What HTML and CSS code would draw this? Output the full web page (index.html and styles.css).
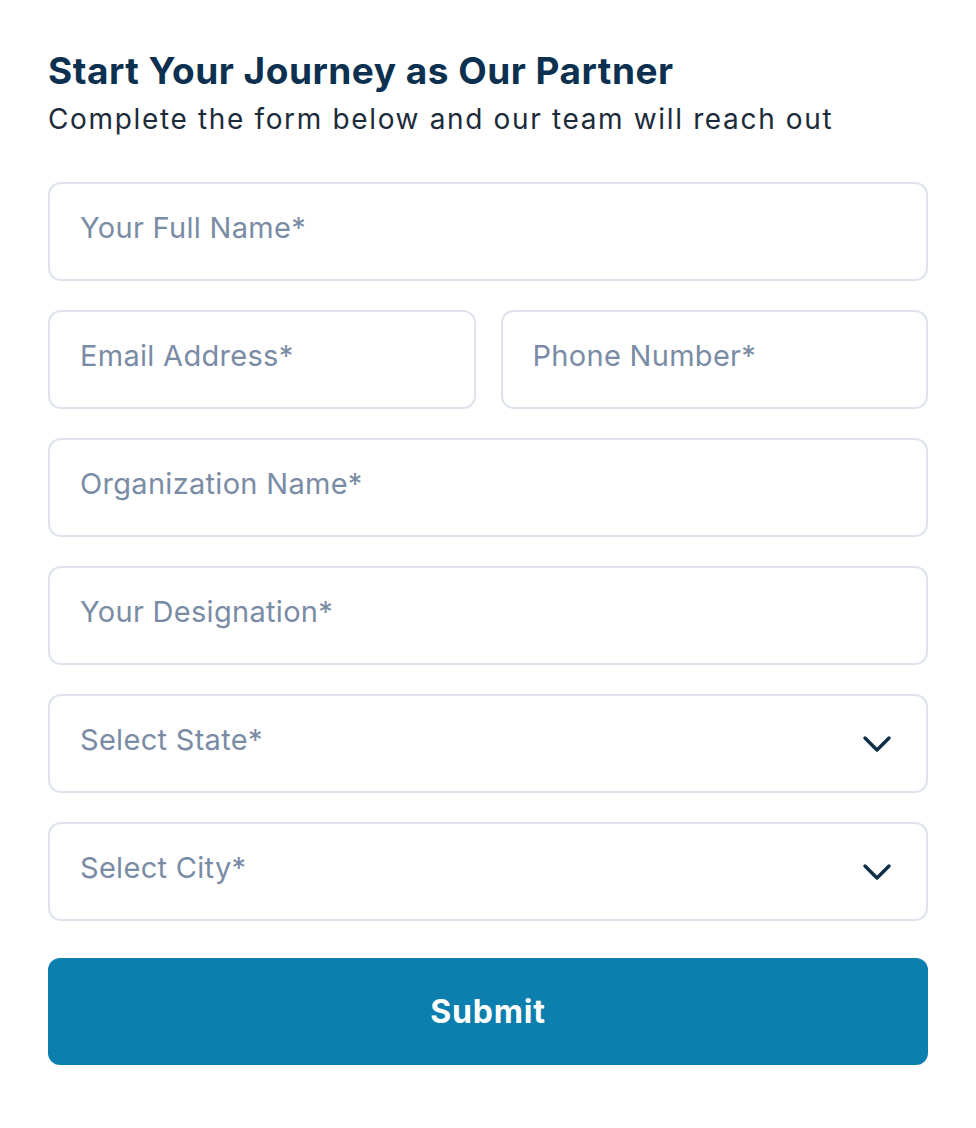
FILE: index.html
```html
<!DOCTYPE html>
<html lang="en">
<head>
<meta charset="utf-8">
<title>Partner Form</title>
<link rel="stylesheet" href="styles.css">
</head>
<body>
<main class="wrap">
  <header class="head">
    <h1 class="title">Start Your Journey as Our Partner</h1>
    <p class="sub">Complete the form below and our team will reach out</p>
  </header>
  <form class="form">
    <div class="field"><span class="ph">Your Full Name*</span></div>
    <div class="row">
      <div class="field"><span class="ph">Email Address*</span></div>
      <div class="field"><span class="ph">Phone Number*</span></div>
    </div>
    <div class="field"><span class="ph">Organization Name*</span></div>
    <div class="field"><span class="ph">Your Designation*</span></div>
    <div class="field select"><span class="ph">Select State*</span>
      <svg class="chev" width="30" height="18" viewBox="0 0 30 18"><path d="M3 3 L15 15 L27 3" fill="none" stroke="#0d3047" stroke-width="3.4" stroke-linecap="round" stroke-linejoin="round"/></svg>
    </div>
    <div class="field select"><span class="ph">Select City*</span>
      <svg class="chev" width="30" height="18" viewBox="0 0 30 18"><path d="M3 3 L15 15 L27 3" fill="none" stroke="#0d3047" stroke-width="3.4" stroke-linecap="round" stroke-linejoin="round"/></svg>
    </div>
    <button type="button" class="submit">Submit</button>
  </form>
</main>
</body>
</html>
```
FILE: styles.css
```css
* { box-sizing: border-box; }
html, body { margin: 0; padding: 0; background: #ffffff; }
body { font-family: "Inter", "Lato", "Liberation Sans", sans-serif; }
.wrap { padding: 48px 48px 0 48px; width: 976px; }
.head { margin-bottom: 41px; }
.title { margin: 0; font-size: 37px; font-weight: 700; color: #0c3150; line-height: 46px; letter-spacing: 0.5px; }
.sub { margin: 3px 0 0 0; font-size: 28px; font-weight: 400; color: #1c2b3a; line-height: 44px; letter-spacing: 1.65px; }
.form { display: flex; flex-direction: column; gap: 29px; }
.row { display: grid; grid-template-columns: 1fr 1fr; gap: 25px; }
.field { height: 99px; border: 2px solid #dde2ec; border-radius: 13px; display: flex; align-items: center; padding: 0 32px 0 30px; justify-content: space-between; }
.ph { font-size: 29px; color: #7a8ca5; letter-spacing: 0.3px; margin-bottom: 8px; }
.chev { margin-right: 2px; }
.submit { margin-top: 8px; height: 107px; border: none; border-radius: 12px; background: #0c7fae; color: #ffffff; font-family: inherit; font-size: 32px; font-weight: 700; cursor: pointer; letter-spacing: 0.8px; padding-bottom: 2px; }
```
